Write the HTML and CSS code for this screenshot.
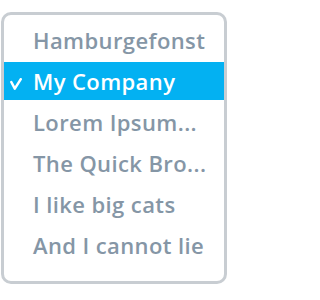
FILE: index.html
```html
<!DOCTYPE html>
<html>
<head>
<meta charset="utf-8">
<link rel="stylesheet" href="styles.css">
</head>
<body>
<ul class="menu">
  <li class="item"><span class="mark"></span><span class="label">Hamburgefonst</span></li>
  <li class="item selected"><span class="mark"><svg width="12" height="12" viewBox="0 0 12 12"><path d="M1.3 4 L4.8 10.6 L10.8 1.2" fill="none" stroke="#fff" stroke-width="2.5" stroke-linecap="round" stroke-linejoin="round"/></svg></span><span class="label">My Company</span></li>
  <li class="item"><span class="mark"></span><span class="label">Lorem Ipsum...</span></li>
  <li class="item"><span class="mark"></span><span class="label">The Quick Bro...</span></li>
  <li class="item"><span class="mark"></span><span class="label">I like big cats</span></li>
  <li class="item"><span class="mark"></span><span class="label">And I cannot lie</span></li>
</ul>
</body>
</html>
```
FILE: styles.css
```css
html, body {
  margin: 0;
  padding: 0;
  background: #ffffff;
}
.menu {
  list-style: none;
  margin: 12px 1px 0 1px;
  width: 220px;
  height: 249px;
  padding: 6px 0 11px 0;
  border: 3px solid #c8cdd2;
  border-radius: 10px;
  display: flex;
  flex-direction: column;
  gap: 3px;
  font-family: "Open Sans", "DejaVu Sans", sans-serif;
  font-weight: 600;
  font-size: 22px;
  letter-spacing: 0.4px;
  color: #8596a6;
}
.item {
  height: 38px;
  display: flex;
  align-items: center;
  padding-left: 6px;
  white-space: nowrap;
}
.mark {
  width: 23px;
  height: 38px;
  display: flex;
  align-items: center;
  padding-top: 5px;
  box-sizing: border-box;
  flex: none;
}
.selected {
  background: #03b1f2;
  color: #ffffff;
}
.label {
  line-height: 38px;
}
```
